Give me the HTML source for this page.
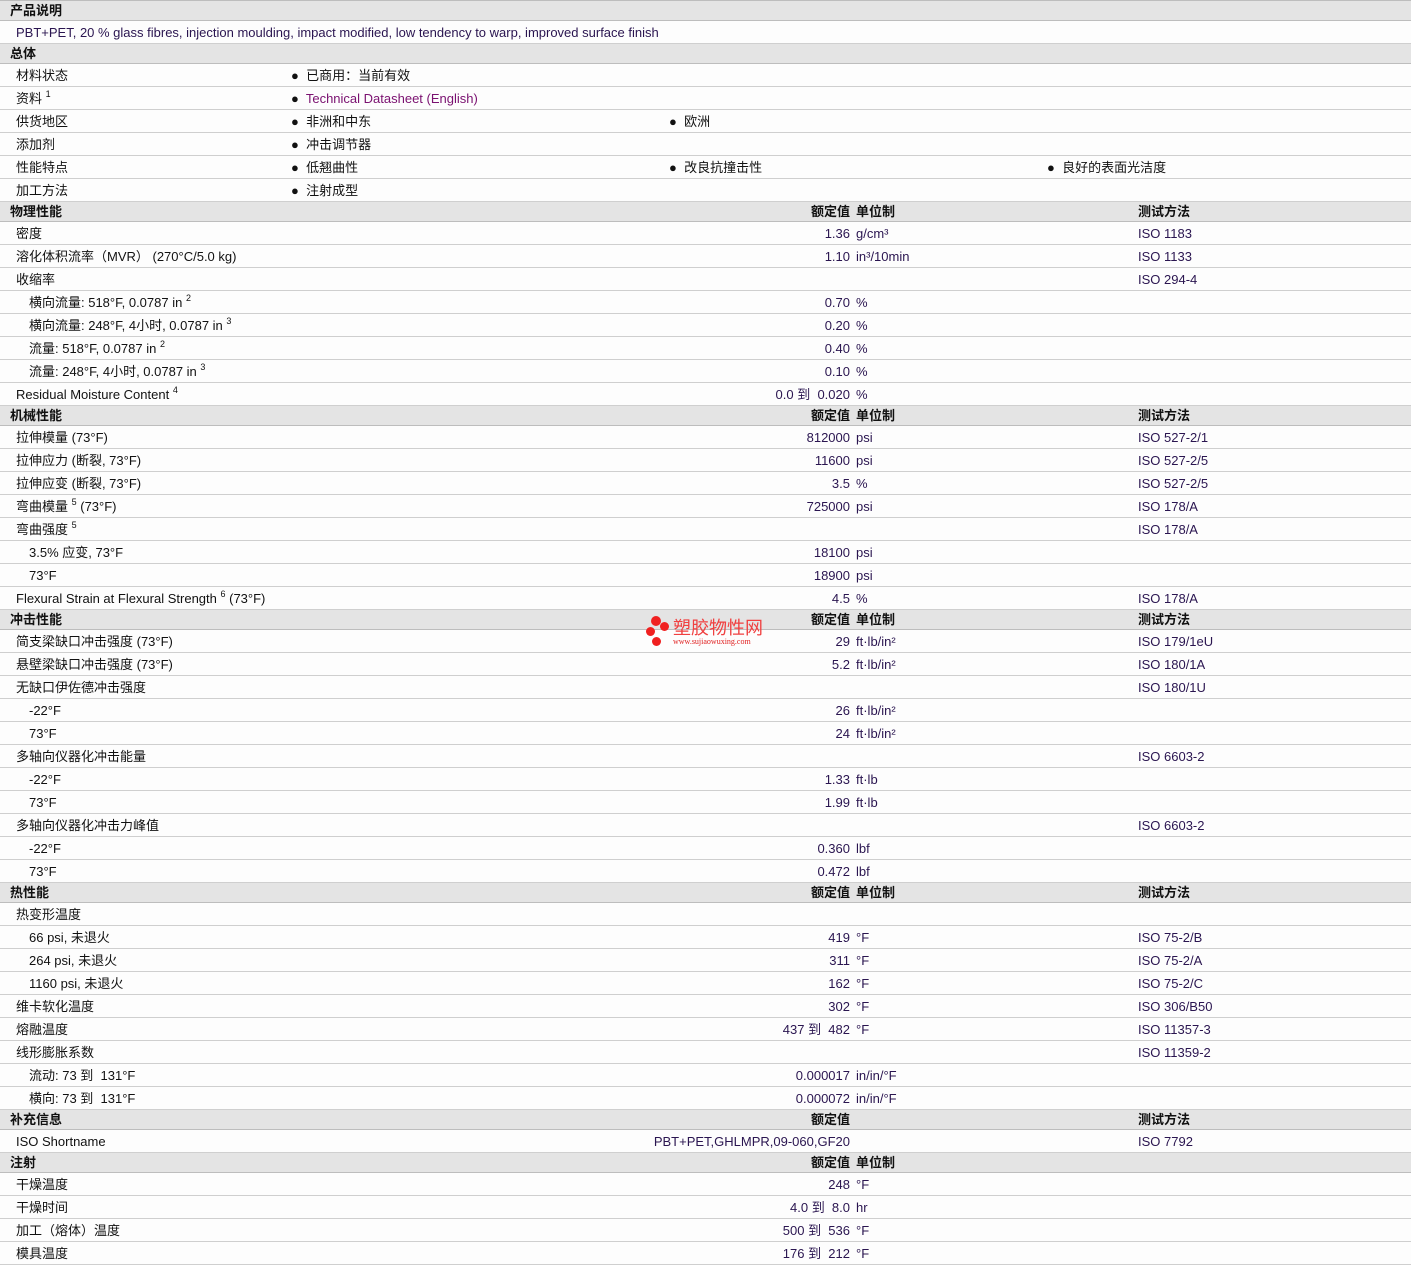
<!DOCTYPE html>
<html><head><meta charset="utf-8"><style>
body{margin:0;background:#fff;font-family:"Liberation Sans","Noto Sans CJK SC",sans-serif;font-size:13px;color:#111;width:1411px;overflow:hidden}
.h{position:relative;height:19px;background:#e4e4e4;border-bottom:1px solid #bdbdbd;font-weight:bold;}
.r{position:relative;height:22px;background:#fdfdfd;border-bottom:1px solid #cfcfcf;}
.h span,.r span{position:absolute;white-space:nowrap;line-height:20px}
.h span{top:0}
.r span{top:2px}
.l{left:16px}.s{left:29px}
.v{right:561px;color:#2a1550}
.u{left:856px;color:#2a1550}
.t{left:1138px;color:#2a1550}
.b1{left:291px}.b2{left:669px}.b3{left:1047px}
sup{font-size:9px;vertical-align:6px;line-height:0}
.hl{left:10px}
.lnk{color:#7a1070}
</style></head><body>
<div class="h" style="border-top:1px solid #bdbdbd;height:19px"><span class="hl">产品说明</span></div>
<div class="r"><span class="l" style="color:#2a1550">PBT+PET, 20 % glass fibres, injection moulding, impact modified, low tendency to warp, improved surface finish</span></div>
<div class="h"><span class="hl">总体</span></div>
<div class="r"><span class="l">材料状态</span><span class="b1">●&nbsp; 已商用：当前有效</span></div>
<div class="r"><span class="l">资料 <sup>1</sup></span><span class="b1">●&nbsp; <span class="lnk" style="position:static">Technical Datasheet (English)</span></span></div>
<div class="r"><span class="l">供货地区</span><span class="b1">●&nbsp; 非洲和中东</span><span class="b2">●&nbsp; 欧洲</span></div>
<div class="r"><span class="l">添加剂</span><span class="b1">●&nbsp; 冲击调节器</span></div>
<div class="r"><span class="l">性能特点</span><span class="b1">●&nbsp; 低翘曲性</span><span class="b2">●&nbsp; 改良抗撞击性</span><span class="b3">●&nbsp; 良好的表面光洁度</span></div>
<div class="r"><span class="l">加工方法</span><span class="b1">●&nbsp; 注射成型</span></div>

<div class="h"><span class="hl">物理性能</span><span class="v" style="color:#111">额定值</span><span class="u" style="color:#111">单位制</span><span class="t" style="color:#111">测试方法</span></div>
<div class="r"><span class="l">密度</span><span class="v">1.36</span><span class="u">g/cm³</span><span class="t">ISO 1183</span></div>
<div class="r"><span class="l">溶化体积流率（MVR） (270°C/5.0 kg)</span><span class="v">1.10</span><span class="u">in³/10min</span><span class="t">ISO 1133</span></div>
<div class="r"><span class="l">收缩率</span><span class="t">ISO 294-4</span></div>
<div class="r"><span class="s">横向流量: 518°F, 0.0787 in <sup>2</sup></span><span class="v">0.70</span><span class="u">%</span></div>
<div class="r"><span class="s">横向流量: 248°F, 4小时, 0.0787 in <sup>3</sup></span><span class="v">0.20</span><span class="u">%</span></div>
<div class="r"><span class="s">流量: 518°F, 0.0787 in <sup>2</sup></span><span class="v">0.40</span><span class="u">%</span></div>
<div class="r"><span class="s">流量: 248°F, 4小时, 0.0787 in <sup>3</sup></span><span class="v">0.10</span><span class="u">%</span></div>
<div class="r"><span class="l">Residual Moisture Content <sup>4</sup></span><span class="v">0.0 到 &nbsp;0.020</span><span class="u">%</span></div>

<div class="h"><span class="hl">机械性能</span><span class="v" style="color:#111">额定值</span><span class="u" style="color:#111">单位制</span><span class="t" style="color:#111">测试方法</span></div>
<div class="r"><span class="l">拉伸模量 (73°F)</span><span class="v">812000</span><span class="u">psi</span><span class="t">ISO 527-2/1</span></div>
<div class="r"><span class="l">拉伸应力 (断裂, 73°F)</span><span class="v">11600</span><span class="u">psi</span><span class="t">ISO 527-2/5</span></div>
<div class="r"><span class="l">拉伸应变 (断裂, 73°F)</span><span class="v">3.5</span><span class="u">%</span><span class="t">ISO 527-2/5</span></div>
<div class="r"><span class="l">弯曲模量 <sup>5</sup> (73°F)</span><span class="v">725000</span><span class="u">psi</span><span class="t">ISO 178/A</span></div>
<div class="r"><span class="l">弯曲强度 <sup>5</sup></span><span class="t">ISO 178/A</span></div>
<div class="r"><span class="s">3.5% 应变, 73°F</span><span class="v">18100</span><span class="u">psi</span></div>
<div class="r"><span class="s">73°F</span><span class="v">18900</span><span class="u">psi</span></div>
<div class="r"><span class="l">Flexural Strain at Flexural Strength <sup>6</sup> (73°F)</span><span class="v">4.5</span><span class="u">%</span><span class="t">ISO 178/A</span></div>

<div class="h"><span class="hl">冲击性能</span><span class="v" style="color:#111">额定值</span><span class="u" style="color:#111">单位制</span><span class="t" style="color:#111">测试方法</span></div>
<div class="r"><span class="l">简支梁缺口冲击强度 (73°F)</span><span class="v">29</span><span class="u">ft·lb/in²</span><span class="t">ISO 179/1eU</span></div>
<div class="r"><span class="l">悬壁梁缺口冲击强度 (73°F)</span><span class="v">5.2</span><span class="u">ft·lb/in²</span><span class="t">ISO 180/1A</span></div>
<div class="r"><span class="l">无缺口伊佐德冲击强度</span><span class="t">ISO 180/1U</span></div>
<div class="r"><span class="s">-22°F</span><span class="v">26</span><span class="u">ft·lb/in²</span></div>
<div class="r"><span class="s">73°F</span><span class="v">24</span><span class="u">ft·lb/in²</span></div>
<div class="r"><span class="l">多轴向仪器化冲击能量</span><span class="t">ISO 6603-2</span></div>
<div class="r"><span class="s">-22°F</span><span class="v">1.33</span><span class="u">ft·lb</span></div>
<div class="r"><span class="s">73°F</span><span class="v">1.99</span><span class="u">ft·lb</span></div>
<div class="r"><span class="l">多轴向仪器化冲击力峰值</span><span class="t">ISO 6603-2</span></div>
<div class="r"><span class="s">-22°F</span><span class="v">0.360</span><span class="u">lbf</span></div>
<div class="r"><span class="s">73°F</span><span class="v">0.472</span><span class="u">lbf</span></div>

<div class="h"><span class="hl">热性能</span><span class="v" style="color:#111">额定值</span><span class="u" style="color:#111">单位制</span><span class="t" style="color:#111">测试方法</span></div>
<div class="r"><span class="l">热变形温度</span></div>
<div class="r"><span class="s">66 psi, 未退火</span><span class="v">419</span><span class="u">°F</span><span class="t">ISO 75-2/B</span></div>
<div class="r"><span class="s">264 psi, 未退火</span><span class="v">311</span><span class="u">°F</span><span class="t">ISO 75-2/A</span></div>
<div class="r"><span class="s">1160 psi, 未退火</span><span class="v">162</span><span class="u">°F</span><span class="t">ISO 75-2/C</span></div>
<div class="r"><span class="l">维卡软化温度</span><span class="v">302</span><span class="u">°F</span><span class="t">ISO 306/B50</span></div>
<div class="r"><span class="l">熔融温度</span><span class="v">437 到 &nbsp;482</span><span class="u">°F</span><span class="t">ISO 11357-3</span></div>
<div class="r"><span class="l">线形膨胀系数</span><span class="t">ISO 11359-2</span></div>
<div class="r"><span class="s">流动: 73 到 &nbsp;131°F</span><span class="v">0.000017</span><span class="u">in/in/°F</span></div>
<div class="r"><span class="s">横向: 73 到 &nbsp;131°F</span><span class="v">0.000072</span><span class="u">in/in/°F</span></div>

<div class="h"><span class="hl">补充信息</span><span class="v" style="color:#111">额定值</span><span class="t" style="color:#111">测试方法</span></div>
<div class="r"><span class="l">ISO Shortname</span><span class="v">PBT+PET,GHLMPR,09-060,GF20</span><span class="t">ISO 7792</span></div>

<div class="h"><span class="hl">注射</span><span class="v" style="color:#111">额定值</span><span class="u" style="color:#111">单位制</span></div>
<div class="r"><span class="l">干燥温度</span><span class="v">248</span><span class="u">°F</span></div>
<div class="r"><span class="l">干燥时间</span><span class="v">4.0 到 &nbsp;8.0</span><span class="u">hr</span></div>
<div class="r"><span class="l">加工（熔体）温度</span><span class="v">500 到 &nbsp;536</span><span class="u">°F</span></div>
<div class="r"><span class="l">模具温度</span><span class="v">176 到 &nbsp;212</span><span class="u">°F</span></div>

<div style="position:absolute;left:643px;top:614px;width:140px;height:36px;pointer-events:none">
<div style="position:absolute;left:8px;top:2px;width:10px;height:10px;border-radius:50%;background:#f02020"></div>
<div style="position:absolute;left:17px;top:8px;width:9px;height:9px;border-radius:50%;background:#f02020"></div>
<div style="position:absolute;left:3px;top:13px;width:9px;height:9px;border-radius:50%;background:#f02020"></div>
<div style="position:absolute;left:9px;top:23px;width:9px;height:9px;border-radius:50%;background:#f02020"></div>
<div style="position:absolute;left:30px;top:3px;font-size:18px;line-height:20px;color:#f04040;font-family:'Noto Sans CJK SC',sans-serif">塑胶物性网</div>
<div style="position:absolute;left:30px;top:23px;font-size:8px;line-height:9px;color:#e02020;font-family:'Liberation Serif',serif">www.sujiaowuxing.com</div>
</div>
</body></html>
